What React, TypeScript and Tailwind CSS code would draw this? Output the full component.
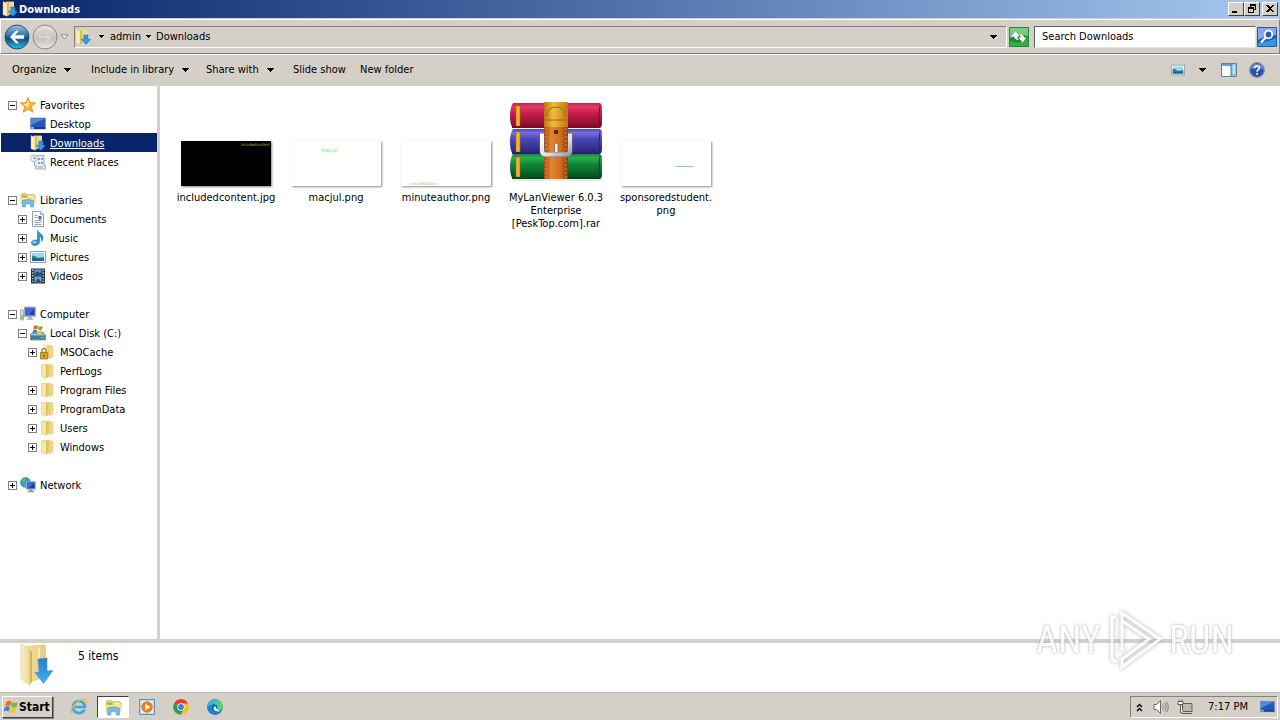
import React from 'react';

type IconProps = { className?: string };

function Folder({ className = 'size-4' }: IconProps) {
  return (
    <svg viewBox="0 0 16 16" className={className} aria-hidden="true">
      <path d="M6 1h5v12.500H6z" fill="#ecd27c" />
      <path d="M9 3.500 13 2v11l-4 1.700z" fill="#f0d988" stroke="#d3b459" strokeWidth=".4" />
      <path d="M1.500 1.200 7 1v13l-5.500-.5z" fill="#efd784" />
      <path d="M1.500 1.200 6 2.400v12.800l-4.500-1.500z" fill="#f8e8ab" stroke="#dcc26c" strokeWidth=".4" />
      <path d="M6 2.400 8 1.500v12.700l-2 1z" fill="#e2c35d" />
    </svg>
  );
}

function DownloadFolder({ className = 'size-4' }: IconProps) {
  return (
    <svg viewBox="0 0 16 16" className={className} aria-hidden="true">
      <path d="M4 .6h8v13H4z" fill="#f0db8e" />
      <path d="M1 .6 5 2v13.200L1 13.800z" fill="#fbedb6" stroke="#dcc371" strokeWidth=".4" />
      <path d="M5 2 7.200 1.200v13L5 15.200z" fill="#dabb5e" />
      <path d="M8.800 6h4.200v4.300h2.600L11 15.500l-4.700-5.200h2.500z" fill="#2f9be0" stroke="#1a6cb4" strokeWidth=".5" />
    </svg>
  );
}

function LargeDownloadFolder() {
  return (
    <svg viewBox="0 0 36 44" className="h-11 w-9" aria-hidden="true">
      <defs>
        <linearGradient id="lf1" x1="0" x2="1"><stop offset="0" stopColor="#f0dc98" /><stop offset="1" stopColor="#e6cd80" /></linearGradient>
        <linearGradient id="lf2" x1="0" x2="1"><stop offset="0" stopColor="#fbf0c4" /><stop offset="1" stopColor="#ecd794" /></linearGradient>
        <linearGradient id="lf3" x1="0" x2="0" y1="0" y2="1"><stop offset="0" stopColor="#2c7cc4" /><stop offset="1" stopColor="#3fb2f4" /></linearGradient>
      </defs>
      <path d="M7 3 24 1.500q3 0 3 3V34L10 40z" fill="url(#lf1)" />
      <path d="M19 4.500h2v29l-2 1z" fill="#f8eab6" />
      <path d="M2 2.500q0-2 2-1L10 6q1 1 1 3v33.500L3.500 37Q2 36 2 34z" fill="url(#lf2)" stroke="#dfc988" strokeWidth=".6" />
      <path d="M10.500 7 11 9v32l2-2V9z" fill="#cfb168" />
      <path d="M19 16l9-1v13l6-.500-9.500 13L16 29.500l4-.5z" fill="url(#lf3)" stroke="#2f86cc" strokeWidth=".5" />
    </svg>
  );
}

function Star({ className = 'size-4' }: IconProps) {
  return (
    <svg viewBox="0 0 16 16" className={className} aria-hidden="true">
      <path d="M8 .5l2 5 5.600.5-4.200 3.600 1.400 5.600L8 12.200l-4.800 3 1.400-5.600L.4 6 6 5.500z" fill="#ffb52c" stroke="#e2811b" strokeWidth=".8" />
      <path d="M8 2.500l1.200 4L8 10.500 3 7l3.800-.4z" fill="#ffeb94" />
    </svg>
  );
}

function Desktop({ className = 'size-4' }: IconProps) {
  return (
    <svg viewBox="0 0 16 16" className={className} aria-hidden="true">
      <path d="M.5 2h15v11H.5z" fill="#2659b5" stroke="#7d95b8" strokeWidth=".8" />
      <path d="M1 2.500h14L1 9z" fill="#4f8ae0" />
      <path d="M1 11h14v2H1z" fill="#1b3f82" />
      <path d="M1 11h3v2H1z" fill="#77b8ee" />
    </svg>
  );
}

function Recent() {
  return (
    <svg viewBox="0 0 16 16" className="size-4" aria-hidden="true">
      <path d="M4.500 1.500h9.500v10h1.500v3.500H6v-3H4.500z" fill="#e4edf4" stroke="#8699aa" strokeWidth=".8" />
      <path d="M8 4h2v2H8zM11 4h2v2h-2zM8 8h2v2H8zM11 8h2v2h-2zM8 12.500h5v1H8z" fill="#7fa6c6" />
      <circle cx="4" cy="4.200" r="3.400" fill="#eef4fa" stroke="#9ca9b6" strokeWidth=".8" />
      <path d="M4 2.200v2.300h1.700" fill="none" stroke="#4774a8" strokeWidth=".8" />
    </svg>
  );
}

function Libraries({ className = 'size-4' }: IconProps) {
  return (
    <svg viewBox="0 0 16 16" className={className} aria-hidden="true">
      <path d="M1 3 2 1.500h4l1 1h7l1 1.500v8H1z" fill="#e5c95e" stroke="#c9a941" strokeWidth=".5" />
      <path d="M2 4h5v1.500H2z" fill="#7dbb59" />
      <path d="M8 3.500h6v1.800H8z" fill="#fff5ca" />
      <path d="M.7 5.500h14.600V12.500H.7z" fill="#f7e38c" />
      <path d="M2.500 8.500q5.500-2 11 0V15h-3v-3.500h-5V15h-3z" fill="#76bde6" stroke="#4b94c8" strokeWidth=".6" />
    </svg>
  );
}

function Document() {
  return (
    <svg viewBox="0 0 16 16" className="size-4" aria-hidden="true">
      <path d="M2.500.5h8l3 3v12h-11z" fill="#fdfeff" stroke="#7e93a8" strokeWidth=".9" />
      <path d="M10.500.5v3h3" fill="#d5e2ec" stroke="#7e93a8" strokeWidth=".7" />
      <path d="M4.500 4.500h3M4.500 6.500h3M4.500 9.500h7M4.500 11.500h7M4.500 13.500h7" stroke="#8498ac" strokeWidth=".9" />
      <path d="M8.500 5h3v3.500h-3z" fill="#3477b6" />
    </svg>
  );
}

function Music() {
  return (
    <svg viewBox="0 0 16 16" className="size-4" aria-hidden="true">
      <path d="M7.500.3c1 3 6 3.700 5.500 8.200-.2 1.500-1 2.500-1.800 3 1-3.200-.5-4.500-1.700-5V12c0 2-2 3.500-4.500 3.500S1 14 1.300 12.500 3.500 9.500 7.500 10z" fill="#2b93d8" stroke="#1768a8" strokeWidth=".5" />
      <ellipse cx="4.500" cy="12.200" rx="2.200" ry="1.300" fill="#8fd0f4" />
    </svg>
  );
}

function Picture({ className = 'size-4' }: IconProps) {
  return (
    <svg viewBox="0 0 16 16" className={className} aria-hidden="true">
      <path d="M.5 2.500h15v11H.5z" fill="#fff" stroke="#7e98a8" strokeWidth=".9" />
      <path d="M2 4h12v8H2z" fill="#9bd7f0" />
      <path d="M2 6.500q3 0 6 2.500l6-1v4H2z" fill="#27866e" />
      <path d="M2 10q6-1 12 .5V12H2z" fill="#2163a3" />
    </svg>
  );
}

function Video() {
  return (
    <svg viewBox="0 0 16 16" className="size-4" aria-hidden="true">
      <path d="M1 .5h14v15H1z" fill="#26323c" />
      <path d="M4.500 1.500h7v6h-7z" fill="#579bd0" />
      <path d="M4.500 8.500h7v6h-7z" fill="#72a8d8" />
      <path d="M5 6l2.500-3 2 2 2-1v3.500H5zM6 13l2-3 3.500 4.500H5z" fill="#254c82" />
      <path d="M2.800 1.500v13.500M13.200 1.500v13.500" stroke="#dfe8ee" strokeWidth="1.200" strokeDasharray="1.400 1.400" />
    </svg>
  );
}

function Computer() {
  return (
    <svg viewBox="0 0 16 16" className="size-4" aria-hidden="true">
      <path d="M.5 4h3v10h-3z" fill="#d8e0d6" stroke="#87958a" strokeWidth=".7" />
      <path d="M1.300 9h1.500v4H1.300z" fill="#7bc04f" />
      <path d="M4.500 1h11v9.500h-11z" fill="#e0e5ec" stroke="#8795aa" strokeWidth=".7" />
      <path d="M5.300 1.800h9.400v7.700H5.300z" fill="#1e3fae" />
      <path d="M5.300 1.800h9.400l-6 7.700H5.300z" fill="#4268d2" />
      <path d="M8.500 10.500h3v2h-3zM6.500 12.500h7v1.300h-7z" fill="#9facbb" />
    </svg>
  );
}

function Flag({ className = 'size-4' }: IconProps) {
  return (
    <svg viewBox="0 0 18 16" className={className} aria-hidden="true">
      <path d="M4 2q3-2 5.500 0L8 7Q5.500 5.500 2.500 7z" fill="#ec6a27" />
      <path d="M10.300 2.500q3 1.700 6.500.2L15 8q-3 1.300-6-.5z" fill="#78b83a" />
      <path d="M2.200 8q3-1.600 5.500 0l-1.500 5Q4 11.700.8 13z" fill="#3983d2" />
      <path d="M8.500 8.400q3 1.600 6.300.4L13.200 14q-3 1.200-6-.5z" fill="#f5c52f" />
    </svg>
  );
}

function Disk() {
  return (
    <svg viewBox="0 0 16 16" className="size-4" aria-hidden="true">
      <path d="M.5 9.500 2.500 7.500h11l2 2.500v5H.5z" fill="#8fc0d0" stroke="#3c6578" strokeWidth=".6" />
      <path d="M1 10.500h14v4H1z" fill="#3f7d9b" />
      <path d="M11 12h3v1h-3z" fill="#72e063" />
      <path d="M4 .8q2-1.200 4 0L7.300 4.200q-2-1-4 0z" fill="#e66428" />
      <path d="M8.600 1.100q2 1 4.200 0L12 4.600q-2 1-4 0z" fill="#74b43a" />
      <path d="M3.200 4.900q2-1 4 0L6.500 8.500q-2-1-4 0z" fill="#3b80cf" />
      <path d="M7.900 5.300q2 1 4 0L11.100 9q-2 1-4 0z" fill="#f4c42d" />
    </svg>
  );
}

function LockedFolder() {
  return (
    <svg viewBox="0 0 16 16" className="size-4" aria-hidden="true">
      <path d="M6 1h5v12.500H6z" fill="#ecd27c" />
      <path d="M9 3.500 13 2v11l-4 1.700z" fill="#f0d988" stroke="#d3b459" strokeWidth=".4" />
      <path d="M3 1.200 7 2.400V15l-4-1.300z" fill="#f8e8ab" />
      <path d="M2 9V6.500q0-2 2-2t2 2V9" fill="none" stroke="#8e7433" strokeWidth="1.200" />
      <path d="M.5 8.500h7.200V15H.5z" fill="#d9a622" stroke="#8d681b" strokeWidth=".7" />
      <path d="M4 10.500v2.500" stroke="#5b4310" />
    </svg>
  );
}

function Network() {
  return (
    <svg viewBox="0 0 16 16" className="size-4" aria-hidden="true">
      <circle cx="5.500" cy="5.500" r="5" fill="#2c9bd6" stroke="#2375a8" strokeWidth=".5" />
      <path d="M2 3q2-2.500 4-1.500L5.500 4 3 6.500zM5 7l3 1-1.500 2.300-2-.5z" fill="#69bd45" />
      <path d="M6.500 4.500h9v8h-9z" fill="#dbe4f0" stroke="#8495b2" strokeWidth=".6" />
      <path d="M7.200 5.200h7.600v6.400H7.200z" fill="#183aa7" />
      <path d="M7.200 5.200h7.600L9 11.600H7.200z" fill="#4068d0" />
      <path d="M9.500 12.500h3V14h-3zM8 14h6v1.300H8z" fill="#8796a8" />
    </svg>
  );
}

function RarArchive() {
  const rolls = [
    { y: 5, id: 'rar-red', dark: '#7c0a27', mid: '#c81e4c', light: '#e23a60' },
    { y: 31, id: 'rar-blue', dark: '#26246f', mid: '#4a46bb', light: '#7370d8' },
    { y: 56, id: 'rar-green', dark: '#04461a', mid: '#0f8a3a', light: '#2fae50' },
  ];
  return (
    <svg viewBox="0 0 96 86" className="h-[86px] w-24" role="img" aria-label="RAR archive">
      <defs>
        {rolls.map((r) => (
          <linearGradient key={r.id} id={r.id} x1="0" x2="0" y1="0" y2="1">
            <stop offset="0" stopColor={r.mid} />
            <stop offset=".15" stopColor={r.light} />
            <stop offset=".4" stopColor={r.mid} />
            <stop offset="1" stopColor={r.dark} />
          </linearGradient>
        ))}
        <linearGradient id="strap" x1="0" x2="1">
          <stop offset="0" stopColor="#a84a12" /><stop offset=".3" stopColor="#e28632" /><stop offset=".7" stopColor="#cf6b20" /><stop offset="1" stopColor="#8e390b" />
        </linearGradient>
        <linearGradient id="gold" x1="0" x2="1">
          <stop offset="0" stopColor="#b9750e" /><stop offset=".4" stopColor="#f1bd3b" /><stop offset="1" stopColor="#bd7711" />
        </linearGradient>
        <linearGradient id="buckle" x1="0" x2="1" y1="0" y2="1">
          <stop offset="0" stopColor="#fff" /><stop offset=".6" stopColor="#dfe1e5" /><stop offset="1" stopColor="#9a9da4" />
        </linearGradient>
      </defs>
      <rect x="5" y="80" width="88" height="3" rx="1.500" fill="#e6ebe5" />
      {rolls.map((r) => (
        <g key={r.id}>
          <path d={`M5 ${r.y}H92q2 1 2 4v16q0 4-2 5H5q-3-3-3-12t3-13z`} fill={`url(#${r.id})`} />
          <path d={`M92 ${r.y + 2}q-2 11 0 22`} stroke={r.dark} strokeWidth="1" fill="none" />
          <path d={`M8 ${r.y + 3}h4v20H8z`} fill="#f3b427" stroke="#a86b10" strokeWidth=".6" />
          <path d={`M4 ${r.y + 24}H92`} stroke={r.dark} strokeWidth="2" />
        </g>
      ))}
      <rect x="36" y="53" width="24" height="28" fill="url(#strap)" />
      <rect x="36" y="4" width="24" height="26" rx="1" fill="url(#gold)" />
      <path d="M39 18q0-9 9-9t9 9M37 22h22" fill="none" stroke="#9a6116" strokeWidth=".9" />
      <rect x="36" y="29" width="24" height="25" fill="url(#strap)" />
      <path d="M38 30v22M58 30v22M38 58v22M58 58v22" stroke="#f4b266" strokeWidth=".7" strokeDasharray="2 2" />
      <circle cx="48" cy="34" r="2.300" fill="#5c280b" />
      <path d="M36 37.500h-2v15q0 4 4 4h20q4 0 4-4v-15h-2" fill="none" stroke="#6f6f78" strokeWidth="5" />
      <path d="M36 37.500h-2v15q0 4 4 4h20q4 0 4-4v-15h-2" fill="none" stroke="url(#buckle)" strokeWidth="4" />
      <rect x="46.500" y="45" width="3.500" height="10" rx="1.500" fill="#f3f3f4" stroke="#74583f" strokeWidth=".7" />
    </svg>
  );
}

function Caret() {
  return (
    <svg viewBox="0 0 7 4" className="h-1 w-[7px] shrink-0" shapeRendering="crispEdges" aria-hidden="true">
      <path d="M0 0h7L3.500 4z" />
    </svg>
  );
}

function SmallCaret() {
  return (
    <svg viewBox="0 0 5 3" className="h-[3px] w-[5px] shrink-0" shapeRendering="crispEdges" aria-hidden="true">
      <path d="M0 0h5L2.500 3z" />
    </svg>
  );
}

function NavArrow({ active }: { active: boolean }) {
  const id = active ? 'nav-back' : 'nav-forward';
  return (
    <svg viewBox="0 0 26 26" className="size-[26px]" aria-hidden="true">
      <defs>
        <linearGradient id={id} x1="0" x2="0" y1="0" y2="1">
          <stop offset="0" stopColor={active ? '#9cc0dc' : '#e6e3df'} />
          <stop offset=".42" stopColor={active ? '#2f78ae' : '#cfccc8'} />
          <stop offset=".55" stopColor={active ? '#0c4a7e' : '#c3c0bc'} />
          <stop offset="1" stopColor={active ? '#2bc0ea' : '#e9e7e4'} />
        </linearGradient>
      </defs>
      <circle cx="13" cy="13" r="12" fill={`url(#${id})`} stroke={active ? '#2c4f6c' : '#8b8986'} />
      <path
        d={active ? 'M12 6.800 6 13l6 6.200h2.800L10.800 14.700H20v-3.400h-9.200l4-4.500z' : 'M14 6.800 20 13l-6 6.200h-2.800l4-4.500H6v-3.400h9.200l-4-4.500z'}
        fill={active ? '#fff' : '#d9d6d2'}
        stroke={active ? '#b5d0e2' : '#bebbb7'}
        strokeWidth=".5"
      />
    </svg>
  );
}

function WindowButton({ label, children, className = '' }: { label: string; children: React.ReactNode; className?: string }) {
  return (
    <button
      type="button"
      aria-label={label}
      className={`flex h-[14px] w-4 items-center justify-center border border-t-white border-l-white border-r-[#404040] border-b-[#404040] bg-[#d4cfc7] ${className}`}
    >
      <svg viewBox="0 0 10 10" className="size-[10px]" shapeRendering="crispEdges" aria-hidden="true">{children}</svg>
    </button>
  );
}

type Node = { label: string; level: 0 | 1 | 2; icon: React.ReactNode; open?: boolean; leaf?: boolean; selected?: boolean };

const groups: Node[][] = [
  [
    { label: 'Favorites', level: 0, icon: <Star />, open: true },
    { label: 'Desktop', level: 1, icon: <Desktop />, leaf: true },
    { label: 'Downloads', level: 1, icon: <DownloadFolder />, leaf: true, selected: true },
    { label: 'Recent Places', level: 1, icon: <Recent />, leaf: true },
  ],
  [
    { label: 'Libraries', level: 0, icon: <Libraries />, open: true },
    { label: 'Documents', level: 1, icon: <Document /> },
    { label: 'Music', level: 1, icon: <Music /> },
    { label: 'Pictures', level: 1, icon: <Picture /> },
    { label: 'Videos', level: 1, icon: <Video /> },
  ],
  [
    { label: 'Computer', level: 0, icon: <Computer />, open: true },
    { label: 'Local Disk (C:)', level: 1, icon: <Disk />, open: true },
    { label: 'MSOCache', level: 2, icon: <LockedFolder /> },
    { label: 'PerfLogs', level: 2, icon: <Folder />, leaf: true },
    { label: 'Program Files', level: 2, icon: <Folder /> },
    { label: 'ProgramData', level: 2, icon: <Folder /> },
    { label: 'Users', level: 2, icon: <Folder /> },
    { label: 'Windows', level: 2, icon: <Folder /> },
  ],
  [{ label: 'Network', level: 0, icon: <Network /> }],
];

const indent = ['pl-[7px]', 'pl-[17px]', 'pl-[27px]'];

function TreeRow({ node }: { node: Node }) {
  return (
    <li className={`flex h-[19px] items-center ${indent[node.level]} ${node.selected ? 'bg-[#0a246a] text-white' : ''}`}>
      {node.leaf ? (
        <span className="w-[9px] shrink-0" />
      ) : (
        <button type="button" aria-label={`${node.open ? 'Collapse' : 'Expand'} ${node.label}`} className="mt-[2px] size-[9px] shrink-0">
          <svg viewBox="0 0 9 9" className="block size-[9px]" shapeRendering="crispEdges" aria-hidden="true">
            <path d="M.5.5h8v8h-8z" fill="#fff" stroke="#808080" />
            <path d={node.open ? 'M2 4.500h5' : 'M2 4.500h5M4.500 2v5'} stroke="#000" />
          </svg>
        </button>
      )}
      <a href="#" className={`ml-[3px] flex items-center gap-1 whitespace-nowrap ${node.selected ? 'underline' : ''}`}>
        <span className="shrink-0">{node.icon}</span>
        <span className="pt-[2px]">{node.label}</span>
      </a>
    </li>
  );
}

function Thumb({ dark = false, children }: { dark?: boolean; children: React.ReactNode }) {
  return (
    <svg
      viewBox="0 0 90 45"
      className={`mb-px h-[45px] w-[90px] shadow-[1px_1px_2px_#888] ${dark ? 'bg-black' : 'bg-white'}`}
      aria-hidden="true"
    >
      {children}
    </svg>
  );
}

const files = [
  {
    name: ['includedcontent.jpg'],
    art: <Thumb dark><text x="89" y="5" textAnchor="end" fontSize="4" fill="#b5b52e" fontFamily="DejaVu Sans Condensed">includedcontent</text></Thumb>,
  },
  { name: ['macjul.png'], art: <Thumb><text x="30" y="11" fontSize="5" fill="#62e862" fontFamily="DejaVu Sans">macjul</text></Thumb> },
  { name: ['minuteauthor.png'], art: <Thumb><text x="9" y="44" fontSize="4" fill="#dba77c" fontFamily="DejaVu Sans">minuteauthor</text></Thumb> },
  { name: ['MyLanViewer 6.0.3', 'Enterprise', '[PeskTop.com].rar'], art: <div className="pb-[3px]"><RarArchive /></div> },
  { name: ['sponsoredstudent.', 'png'], art: <Thumb><path d="M55 25.500h18" stroke="#8ccfb0" strokeWidth="1" /></Thumb> },
];

const menus = [
  { label: 'Organize', caret: true, width: 'w-[79px]' },
  { label: 'Include in library', caret: true, width: 'w-[115px]' },
  { label: 'Share with', caret: true, width: 'w-[87px]' },
  { label: 'Slide show', caret: false, width: 'w-[67px]' },
  { label: 'New folder', caret: false, width: 'w-[67px]' },
];

function Explorer() {
  return (
    <div className="flex min-h-0 grow flex-col">
      <header className="flex h-[18px] shrink-0 items-center bg-linear-to-r from-[#0a246a] to-[#a6caf0] pr-[2px] pl-[2px]">
        <DownloadFolder />
        <h1 className="ml-px pt-px text-[11px] font-bold text-white">Downloads</h1>
        <div className="ml-auto flex">
          <WindowButton label="Minimize"><path d="M1 7h5v2H1z" /></WindowButton>
          <WindowButton label="Restore">
            <path d="M3 0h6v6H7V5h1V2H4v1H3zM1 3h6v6H1zM2 5v3h4V5z" fillRule="evenodd" />
          </WindowButton>
          <WindowButton label="Close" className="ml-[2px]"><path d="M1 1h2l2 2 2-2h2L6 4.500 9 8H7L5 6 3 8H1l3-3.500z" /></WindowButton>
        </div>
      </header>

      <nav aria-label="Location" className="mt-px flex h-[35px] shrink-0 items-center border border-t-white border-l-white border-r-[#808080] border-b-[#808080] pr-[2px] pl-[3px]">
        <button type="button" aria-label="Back"><NavArrow active /></button>
        <button type="button" aria-label="Forward" className="ml-[2px]"><NavArrow active={false} /></button>
        <button type="button" aria-label="Recent locations" className="ml-[2px] mr-[5px]">
          <svg viewBox="0 0 9 6" className="h-[6px] w-[9px]" aria-hidden="true"><path d="M1 .8h7L4.500 4.800z" fill="#f5f4f2" stroke="#77736e" strokeWidth=".8" /></svg>
        </button>
        <div className="flex h-[22px] grow items-center border border-t-[#808080] border-l-[#808080] border-r-white border-b-white pr-[9px]">
          <DownloadFolder />
          <button type="button" aria-label="Folders" className="ml-2 mr-[6px]"><SmallCaret /></button>
          <a href="#">admin</a>
          <button type="button" aria-label="Folders in admin" className="mx-[5px]"><SmallCaret /></button>
          <a href="#">Downloads</a>
          <button type="button" aria-label="Previous locations" className="ml-auto"><Caret /></button>
        </div>
        <button type="button" aria-label="Refresh" className="ml-[2px]">
          <svg viewBox="0 0 20 20" className="size-5" aria-hidden="true">
            <rect width="20" height="20" rx="1" fill="#1f8a35" />
            <path d="M1 1h18v8q-8-3-18 2z" fill="#7fc884" />
            <path d="M1 19v-5q9 4 18-3v8z" fill="#35b045" />
            <path d="M2.500 9.500 6.500 4.500l4 5H8.200q.2 2.200 1.700 3.500-4.500-.5-5-3.500zM17.500 10.500l-4 5-4-5h2.300q-.2-2.200-1.700-3.500 4.500.5 5 3.500z" fill="#fff" />
          </svg>
        </button>
        <input
          aria-label="Search Downloads"
          placeholder="Search Downloads"
          className="ml-[5px] h-[22px] w-[222px] border border-t-[#606060] border-l-[#606060] border-r-[#e8e5df] border-b-[#e8e5df] bg-white pl-[7px] text-[11px] placeholder:text-black"
        />
        <button type="button" aria-label="Search" className="ml-px">
          <svg viewBox="0 0 20 20" className="size-5" aria-hidden="true">
            <rect width="20" height="20" rx="1" fill="#2258c0" />
            <path d="M1 1h18v7Q9 8 1 13z" fill="#84a9e6" />
            <path d="M1 19v-3q10-1 18-5v8z" fill="#2b9be2" />
            <circle cx="11.500" cy="7.500" r="3.800" fill="#2b58bb" stroke="#fff" strokeWidth="1.800" />
            <path d="M8.700 10.500 4.500 15" stroke="#fff" strokeWidth="2.200" strokeLinecap="round" />
          </svg>
        </button>
      </nav>

      <div role="toolbar" className="flex h-8 shrink-0 items-center border-t border-white pr-[15px] pb-px pl-3">
        {menus.map((m) => (
          <button key={m.label} type="button" className={`flex items-center gap-2 whitespace-nowrap ${m.width}`}>
            {m.label}
            {m.caret && <Caret />}
          </button>
        ))}
        <button type="button" aria-label="Change view" className="ml-auto"><Picture className="size-[14px]" /></button>
        <button type="button" aria-label="More views" className="ml-[14px]"><Caret /></button>
        <button type="button" aria-label="Preview pane" className="ml-[15px]">
          <svg viewBox="0 0 16 14" className="h-[14px] w-4" aria-hidden="true">
            <path d="M.5.500h15v13H.5z" fill="#fff" stroke="#5882a3" />
            <path d="M1 1h9v2H1z" fill="#6f9fc4" />
            <path d="M10 1h5v12h-5z" fill="#8ac6e4" />
            <path d="M10 1v12" stroke="#41779e" />
            <path d="M12 2h2v9h-2z" fill="#c3e6f4" />
          </svg>
        </button>
        <button type="button" aria-label="Help" className="ml-3">
          <svg viewBox="0 0 16 16" className="size-4" aria-hidden="true">
            <circle cx="8" cy="8" r="7.300" fill="#2d4fae" stroke="#8390b3" strokeWidth="1.200" />
            <path d="M2 7q0-5 6-5t6 5Q8 5 2 7z" fill="#6b8bd8" />
            <path d="M5.700 6.200q0-2.200 2.400-2.200 2.300 0 2.300 1.900 0 1-1.200 1.800Q8.100 8.400 8.100 9.700M8.100 11v1.800" fill="none" stroke="#fff" strokeWidth="1.700" />
          </svg>
        </button>
      </div>

      <div className="flex min-h-0 grow bg-white">
        <aside className="w-[160px] shrink-0 overflow-hidden border-r-[3px] border-[#d4cfc7] pt-[9px] pl-px">
          <div className="flex flex-col gap-[19px]">
            {groups.map((g) => (
              <ul key={g[0].label}>{g.map((n) => <TreeRow key={n.label} node={n} />)}</ul>
            ))}
          </div>
        </aside>
        <main className="grow pt-[5px] pl-[11px]">
          <ul className="flex flex-wrap">
            {files.map((f) => (
              <li key={f.name[0]} className="flex w-[110px] flex-col items-center">
                <div className="flex h-24 items-end">{f.art}</div>
                <p className="mt-1 text-center leading-[13px] whitespace-nowrap">
                  {f.name.map((line) => <span key={line} className="block">{line}</span>)}
                </p>
              </li>
            ))}
          </ul>
        </main>
      </div>

      <section aria-label="Details" className="flex h-[53px] shrink-0 border-t-4 border-[#d4cfc7] bg-white pl-[19px]">
        <LargeDownloadFolder />
        <p className="mt-[5px] ml-[23px] text-xs">5 items</p>
      </section>
    </div>
  );
}

function Taskbar() {
  return (
    <footer className="flex h-7 shrink-0 items-center border-t border-[#b8b5af] pt-px pr-[2px] pl-[2px]">
      <button type="button" className="flex h-[22px] w-[51px] items-center border border-t-white border-l-white border-r-[#404040] border-b-[#404040] text-xs font-bold shadow-[1px_1px_0_#808080]">
        <Flag className="h-4 w-4" />
        Start
      </button>
      <div className="ml-[10px] flex items-center gap-[2px]">
        <button type="button" aria-label="Internet Explorer" className="flex h-[22px] w-8 items-center justify-center">
          <svg viewBox="0 0 18 18" className="size-[18px]" aria-hidden="true">
            <path d="M14.500 11.500A6 6 0 1 1 15 9H5" fill="none" stroke="#3ba6e4" strokeWidth="2.700" />
            <path d="M2.500 15.500C-1 14 3 6 9.500 2.700 14 .5 17.500 1 16 5" fill="none" stroke="#e8b936" strokeWidth="1.400" />
          </svg>
        </button>
        <button type="button" aria-label="Windows Explorer" className="flex h-[22px] w-8 items-center justify-center border border-t-[#404040] border-l-[#404040] border-r-white border-b-white bg-white">
          <Libraries className="size-[17px]" />
        </button>
        <button type="button" aria-label="Media Player" className="flex h-[22px] w-8 items-center justify-center">
          <svg viewBox="0 0 16 16" className="size-4" aria-hidden="true">
            <path d="M.5.500h15v15H.5z" fill="#b6d6ed" stroke="#5b94c2" />
            <path d="M2 2h12v12H2z" fill="#e6f1f8" />
            <circle cx="8" cy="8" r="5.800" fill="#f07d1c" />
            <path d="M6.200 4.700v6.600L11.500 8z" fill="#fff" />
          </svg>
        </button>
        <button type="button" aria-label="Chrome" className="flex h-[22px] w-8 items-center justify-center">
          <svg viewBox="0 0 16 16" className="size-4" aria-hidden="true">
            <circle cx="8" cy="8" r="7.800" fill="#fbc116" />
            <path d="M8 8 1.200 4.200A7.800 7.800 0 0 1 14.900 4.400H8z" fill="#e33b2e" />
            <path d="M8 8 1.200 4.200A7.800 7.800 0 0 0 7.500 15.800L11 9.900z" fill="#2da04e" />
            <circle cx="8" cy="8" r="3.700" fill="#fff" />
            <circle cx="8" cy="8" r="2.900" fill="#3b7ce8" />
          </svg>
        </button>
        <button type="button" aria-label="Edge" className="flex h-[22px] w-8 items-center justify-center">
          <svg viewBox="0 0 16 16" className="size-4" aria-hidden="true">
            <circle cx="8" cy="8" r="7.800" fill="#1468b7" />
            <path d="M.3 7A7.800 7.800 0 0 1 15.800 8c0 3-4.500 3.600-6 2 2-3-1-5.500-4.300-4.500Q2 6 .3 8z" fill="#35bfc4" />
            <path d="M9 .3A7.800 7.800 0 0 1 15.800 8c0 3-4.500 3.600-6 2 2-2.500 2-6-.8-9.700z" fill="#5fce68" />
            <path d="M.3 8.500Q2 5 6 5.500 3.500 9 6.500 12q3 2.500 7.500 1A7.800 7.800 0 0 1 .3 8.500z" fill="#1f82d2" />
            <path d="M9.800 10q-1.500-1-.8-2.500Q7 7 6.500 9q.5 3.500 4.500 3.500 2 0 4-1-3 .6-5.200-1.500z" fill="#e9f4f8" />
          </svg>
        </button>
      </div>
      <div className="ml-auto flex h-[22px] items-center border border-t-[#808080] border-l-[#808080] border-r-white border-b-white pr-[2px] pl-[5px]">
        <button type="button" aria-label="Show hidden icons">
          <svg viewBox="0 0 7 9" className="h-[9px] w-[7px]" aria-hidden="true"><path d="M1 4l2.500-2.500L6 4M1 8l2.500-2.500L6 8" fill="none" stroke="#000" strokeWidth="1.400" /></svg>
        </button>
        <button type="button" aria-label="Volume" className="ml-[10px]">
          <svg viewBox="0 0 16 16" className="size-4" aria-hidden="true">
            <path d="M1 5.500h2.500L7.500 1.500v13l-4-4H1z" fill="#fff" stroke="#6d6b68" />
            <path d="M9.500 5.500q2 2.500 0 5M11.500 3.800q3.200 4.200 0 8.400M13.300 2.500q4 5.500 0 11" fill="none" stroke="#83807c" />
          </svg>
        </button>
        <button type="button" aria-label="Network status" className="ml-2">
          <svg viewBox="0 0 16 16" className="size-4" aria-hidden="true">
            <path d="M5.500 4.500h9.500v8H5.500z" fill="#bbb8b3" stroke="#5f5d5a" />
            <path d="M5.500 14.500h9.500" stroke="#5f5d5a" />
            <path d="M1 2.500h5v3H1zM2 .5v2M5 .5v2M3.500 5.500V14H6" fill="#fff" stroke="#5f5d5a" />
          </svg>
        </button>
        <time className="w-[67px] pl-[3px] text-center">7:17 PM</time>
        <button type="button" aria-label="Show desktop"><Desktop className="h-4 w-[15px]" /></button>
      </div>
    </footer>
  );
}

export default function App() {
  return (
    <div className="relative flex h-screen flex-col overflow-hidden bg-[#d4cfc7] font-['DejaVu_Sans_Condensed','DejaVu_Sans',sans-serif] text-[11px] leading-[14px] text-black">
      <Explorer />
      <Taskbar />
      <div className="pointer-events-none absolute right-[46px] bottom-12 flex items-center gap-1 font-['Liberation_Sans_Narrow','Roboto_Condensed',sans-serif] text-[38px] leading-[38px] text-white opacity-80 [text-shadow:0_0_3px_#aaa,0_0_2px_#bbb]">
        <span>ANY</span>
        <svg viewBox="0 0 60 64" className="h-16 w-[60px] drop-shadow-[0_0_2px_#999]" aria-hidden="true">
          <path d="M11 9H7v42l4 3M17 43V5l38 26-38 28v-8l27-20-27-18" fill="none" stroke="#fff" strokeWidth="3" />
        </svg>
        <span>RUN</span>
      </div>
    </div>
  );
}
